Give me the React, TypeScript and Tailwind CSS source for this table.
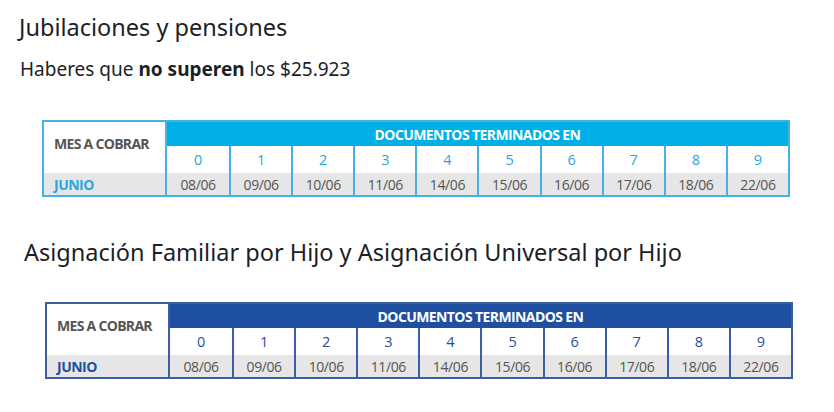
const fechas = ['08/06', '09/06', '10/06', '11/06', '14/06', '15/06', '16/06', '17/06', '18/06', '22/06'];

interface TablaProps {
    variant: 'cyan' | 'navy';
    className?: string;
}

// Calendario de pagos por terminación de documento
const TablaPagos = ({ variant, className }: TablaProps) => {
    const cyan = variant === 'cyan';
    const border = cyan ? 'border-[#45b2e3]' : 'border-[#3b5ea8]';
    const head = cyan ? 'bg-[#00afe6]' : 'bg-[#1f4fa1]';
    const accent = cyan ? 'text-[#2ba6de]' : 'text-[#1f4fa1]';

    return (
        <div className={`flex w-[748px] border-2 font-['Open_Sans',sans-serif] ${border} ${className ?? ''}`}>
            <div className={`flex w-[123px] shrink-0 flex-col border-r-2 ${border}`}>
                <div className="flex h-[51px] items-center px-[10px] pb-[8px]">
                    <span className="text-[14px] font-bold tracking-[-0.7px] text-[#555]">MES A COBRAR</span>
                </div>
                <div className="flex h-[22px] items-center bg-[#e6e6e6] px-[10px]">
                    <span className={`text-[14px] font-bold tracking-[-0.5px] ${accent}`}>JUNIO</span>
                </div>
            </div>
            <div className="flex flex-1 flex-col">
                <div className={`flex h-[24px] items-center justify-center ${head}`}>
                    <span className="text-[14px] font-bold tracking-[-0.6px] text-white">DOCUMENTOS TERMINADOS EN</span>
                </div>
                <div className="grid h-[27px] grid-cols-10">
                    {fechas.map((_, i) => (
                        <div
                            key={i}
                            className={`flex items-center justify-center text-[14.5px] font-medium ${accent} ${i > 0 ? `border-l-2 ${border}` : ''}`}
                        >
                            {i}
                        </div>
                    ))}
                </div>
                <div className="grid h-[22px] grid-cols-10 bg-[#e6e6e6]">
                    {fechas.map((f, i) => (
                        <div
                            key={f}
                            className={`flex items-center justify-center text-[14px] tracking-[-0.4px] text-[#555] ${i > 0 ? `border-l-2 ${border}` : ''}`}
                        >
                            {f}
                        </div>
                    ))}
                </div>
            </div>
        </div>
    );
};

export default function App() {
    return (
        <div className="h-[412px] w-[834px] bg-white font-['Noto_Sans',sans-serif] text-[#1b1f27]">
            <h1 className="ml-[19px] pt-[12px] text-[23.5px] leading-[30px]">Jubilaciones y pensiones</h1>
            <p className="ml-[20px] mt-[14px] text-[19px] leading-[26px]">
                Haberes que <b className="font-bold">no superen</b> los $25.923
            </p>
            <TablaPagos variant="cyan" className="ml-[42px] mt-[38px]" />
            <h2 className="ml-[24px] mt-[40px] text-[23.5px] leading-[30px]">
                Asignación Familiar por Hijo y Asignación Universal por Hijo
            </h2>
            <TablaPagos variant="navy" className="ml-[45px] mt-[35px]" />
        </div>
    );
}
